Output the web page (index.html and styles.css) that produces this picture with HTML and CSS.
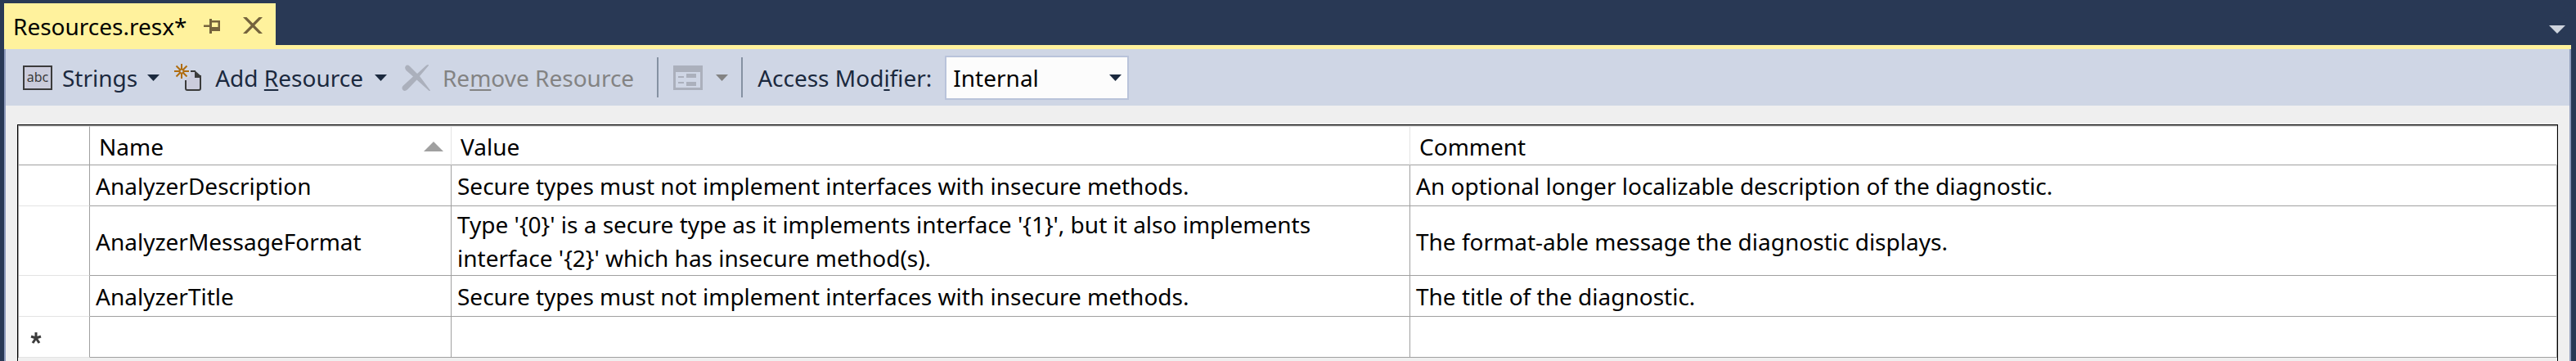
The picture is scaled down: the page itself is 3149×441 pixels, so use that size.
FILE: index.html
```html
<!DOCTYPE html>
<html lang="en">
<head>
    <meta charset="UTF-8">
    <meta name="viewport" content="width=device-width, initial-scale=1.0">
    <title>Resources.resx</title>
    <link rel="stylesheet" href="styles.css">
</head>
<body>
    <header class="tab-bar">
        <div class="tab">
            <span class="tab-title">Resources.resx*</span>
            <button type="button" class="icon-button pin" aria-label="Pin tab">
                <svg width="20" height="18" viewBox="0 0 20 18">
                    <path d="M0 7.500h7v2.500h-7zM7 0h3v18h-3zM10 2h10v13h-10zM10 4.500v5.500h7.500v-5.500z" fill="#75633d" fill-rule="evenodd"/>
                </svg>
            </button>
            <button type="button" class="icon-button close" aria-label="Close tab">
                <svg width="24" height="20" viewBox="0 0 24 20">
                    <path d="M0 0h4.500l7.500 7.500L19.500 0H24L14.200 10l9.800 10h-4.500l-7.500-7.500L4.500 20H0l9.800-10z" fill="#75633d"/>
                </svg>
            </button>
        </div>
        <button type="button" class="icon-button tab-list" aria-label="Open documents">
            <svg width="20" height="10" viewBox="0 0 20 10"><path d="M0 0h20L10 10z" fill="#ced4dd"/></svg>
        </button>
    </header>

    <main class="document">
        <div class="toolbar">
            <button type="button" class="tool strings">
                <svg width="36" height="30" viewBox="0 0 36 30">
                    <rect x="1" y="1" width="34" height="28" fill="#cbccdc" stroke="#3b3b3b" stroke-width="2"/>
                    <text x="18" y="20" class="abc" text-anchor="middle">abc</text>
                </svg>
                <span>Strings</span>
                <svg class="arrow" width="15" height="8" viewBox="0 0 15 8"><path d="M0 0h15L7.500 8z"/></svg>
            </button>
            <button type="button" class="tool add">
                <svg width="36" height="34" viewBox="0 0 36 34">
                    <path d="M14 19v12h18V15l-6-6h-6v6z" fill="#cbccdc"/>
                    <path d="M14 20v10q0 2 2 2h14q2 0 2-2V14M20 9h6" fill="none" stroke="#3b3b3b" stroke-width="2"/>
                    <path d="M25 8l8 7v2h-8z" fill="#3b3b3b"/>
                    <path d="M9 0v6.500M9 11.500V18M0 9h6.500M11.500 9H18M2.500 2.500l5 5M10.500 10.500l5 5M15.500 2.500l-5 5M7.500 10.500l-5 5" stroke="#b06d10" stroke-width="2"/>
                    <circle cx="9" cy="9" r="2.500" fill="none" stroke="#b06d10" stroke-width="2"/>
                </svg>
                <span>Add <u>R</u>esource</span>
                <svg class="arrow" width="15" height="8" viewBox="0 0 15 8"><path d="M0 0h15L7.500 8z"/></svg>
            </button>
            <button type="button" class="tool remove" disabled>
                <svg width="36" height="34" viewBox="0 0 36 34">
                    <path d="M5 2.500q2-2 5 .5l9 9L30 2q3-2 3 0L22 15l13 17.500q-1 1-2 0L18.500 19.500 7 31.500Q4 34 1.500 32q-2-2.500 0-5L14 15.500 5.500 8q-2.500-3-.5-5.500z" fill="#abb0bc"/>
                </svg>
                <span>Re<u>m</u>ove Resource</span>
            </button>
            <span class="separator"></span>
            <button type="button" class="tool view" disabled aria-label="View">
                <svg width="36" height="30" viewBox="0 0 36 30">
                    <path d="M0 0h36v30H0zM3 8v19h30V8z" fill="#abb0bc" fill-rule="evenodd"/>
                    <path d="M6 13h7v2H6zM6 20h7v2H6zM16 10h12v5H16zM16 20h12v5H16z" fill="#abb0bc"/>
                </svg>
                <svg class="arrow" width="15" height="8" viewBox="0 0 15 8"><path d="M0 0h15L7.500 8z"/></svg>
            </button>
            <span class="separator"></span>
            <label class="modifier-label" for="modifier">Access Mod<u>i</u>fier:</label>
            <div class="select-box">
                <select id="modifier">
                    <option>Internal</option>
                    <option>Public</option>
                    <option>No code generation</option>
                </select>
                <svg class="arrow" width="15" height="8" viewBox="0 0 15 8"><path d="M0 0h15L7.500 8z"/></svg>
            </div>
        </div>

        <div class="grid-area">
            <table class="grid">
                <colgroup>
                    <col class="col-row">
                    <col class="col-name">
                    <col class="col-value">
                    <col class="col-comment">
                </colgroup>
                <thead>
                    <tr>
                        <th scope="col"></th>
                        <th scope="col">
                            <div class="sorted">
                                Name
                                <svg width="24" height="12" viewBox="0 0 24 12"><path d="M0 12h24L12 0z" fill="#a0a0a0"/></svg>
                            </div>
                        </th>
                        <th scope="col">Value</th>
                        <th scope="col">Comment</th>
                    </tr>
                </thead>
                <tbody>
                    <tr>
                        <th scope="row"></th>
                        <td>AnalyzerDescription</td>
                        <td>Secure types must not implement interfaces with insecure methods.</td>
                        <td>An optional longer localizable description of the diagnostic.</td>
                    </tr>
                    <tr class="tall">
                        <th scope="row"></th>
                        <td>AnalyzerMessageFormat</td>
                        <td>Type '{0}' is a secure type as it implements interface '{1}', but it also implements<br>interface '{2}' which has insecure method(s).</td>
                        <td>The format-able message the diagnostic displays.</td>
                    </tr>
                    <tr>
                        <th scope="row"></th>
                        <td>AnalyzerTitle</td>
                        <td>Secure types must not implement interfaces with insecure methods.</td>
                        <td>The title of the diagnostic.</td>
                    </tr>
                    <tr>
                        <th scope="row" class="new-row">
                            <svg width="14" height="16" viewBox="0 0 14 16">
                                <path d="M7 8V1M7 8L1 6M7 8l6-2M7 8l-4 6M7 8l4 6" stroke="#3c3c3c" stroke-width="3"/>
                            </svg>
                        </th>
                        <td></td>
                        <td></td>
                        <td></td>
                    </tr>
                </tbody>
            </table>
        </div>
    </main>
</body>
</html>
```
FILE: styles.css
```css
* {
    box-sizing: border-box;
}

body {
    margin: 0;
    padding: 4px 6px 0 5px;
    min-height: 100vh;
    display: flex;
    flex-direction: column;
    background: #293955;
    color: #000;
    font-family: 'Noto Sans', 'Open Sans', sans-serif;
    font-size: 28px;
    line-height: 41px;
}

button, select {
    font: inherit;
    color: inherit;
    background: none;
    border: none;
    padding: 0;
    margin: 0;
}

svg {
    display: block;
    flex: none;
}

u {
    text-underline-offset: 3px;
    text-decoration-thickness: 2px;
    text-decoration-skip-ink: none;
}

/* Document tabs */
.tab-bar {
    display: flex;
    justify-content: space-between;
    border-bottom: 5px solid #fff29d;
}

.tab {
    display: flex;
    align-items: center;
    width: 332px;
    height: 51px;
    padding: 4px 16px 0 11px;
    background: #fff29d;
}

.tab-title {
    padding-top: 2px;
}

.pin {
    margin-left: auto;
    margin-right: 28px;
}

.close {
    padding-bottom: 2px;
}

.tab-list {
    align-self: center;
    margin-right: 7px;
    padding-top: 13px;
}

/* Toolbar */
.document {
    flex: 1;
    display: flex;
    flex-direction: column;
    border: solid #8e9bbc;
    border-width: 0 2px;
    background: #efefef;
}

.toolbar {
    display: flex;
    align-items: center;
    height: 69px;
    padding: 0 21px;
    background: #cfd6e5;
    color: #1b293e;
}

.tool {
    display: flex;
    align-items: center;
    gap: 12px;
    margin-right: 18px;
    white-space: nowrap;
}

.tool span, .modifier-label {
    padding-top: 2px;
}

.tool:disabled {
    color: #838383;
}

.add, .remove {
    gap: 14px;
}

.remove {
    margin-right: 28px;
}

.view {
    gap: 16px;
    margin-right: 16px;
}

.arrow {
    fill: currentColor;
}

.abc {
    font-size: 16px;
    fill: #3b3b3b;
}

.separator {
    width: 2px;
    height: 49px;
    margin-right: 18px;
    background: #8591a2;
}

.modifier-label {
    margin-right: 16px;
}

.select-box {
    display: grid;
    grid-template-columns: 1fr;
    align-items: center;
    width: 225px;
    height: 54px;
    border: 2px solid #b9c3da;
    background: #fcfcfc;
}

.select-box select {
    grid-area: 1 / 1;
    width: 100%;
    height: 50px;
    padding: 2px 8px 0;
    appearance: none;
    color: #000;
}

.select-box .arrow {
    grid-area: 1 / 1;
    justify-self: end;
    margin-right: 7px;
    pointer-events: none;
}

/* Resource grid */
.grid-area {
    flex: 1;
    margin: 23px 14px 0;
    border: solid #000;
    border-width: 1px 1px 0;
}

.grid {
    width: 100%;
    table-layout: fixed;
    border-collapse: separate;
    border-spacing: 0;
    border: solid #a0a0a0;
    border-width: 1px 0 0 1px;
    background: #fff;
}

.col-row {
    width: 87px;
}

.col-name {
    width: 442px;
}

.col-value {
    width: 1172px;
}

.grid th, .grid td {
    height: 50px;
    padding: 2px 7px 0;
    border: solid #a0a0a0;
    border-width: 0 1px 1px 0;
    font-weight: normal;
    text-align: left;
    vertical-align: middle;
}

.grid thead th {
    height: 48px;
    padding: 2px 9px 0 11px;
    border-top: 1px solid #e3e3e3;
    border-right-color: #e3e3e3;
}

.grid thead th:first-child {
    border-right-color: #a0a0a0;
}

.grid tbody th {
    border-bottom-color: #e3e3e3;
}

/* two lines of text */
.grid .tall td {
    height: 85px;
}

.grid .new-row {
    padding-left: 14px;
}

.sorted {
    display: flex;
    align-items: center;
    justify-content: space-between;
}
```
